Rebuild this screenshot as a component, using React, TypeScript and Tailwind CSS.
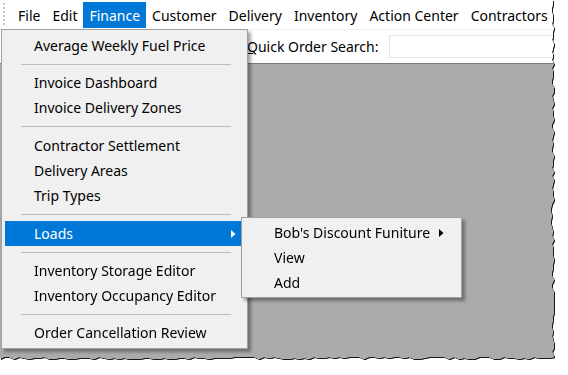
import React from "react";

function tornPolygon(): string {
  const W = 554;
  const H = 359;
  const pts: string[] = [];
  pts.push("0px 0px");
  let seed = 7;
  const rnd = () => {
    seed = (seed * 9301 + 49297) % 233280;
    return seed / 233280;
  };
  for (let y = 0; y <= H; y += 4) {
    const x = W - 1 + Math.round(rnd() * 3 - 1.5) + (y > 200 && y < 240 ? -1 : 0);
    pts.push(`${x}px ${y}px`);
  }
  for (let x = W; x >= 0; x -= 5) {
    const y = H - 1 + Math.round(rnd() * 3 - 1.5);
    pts.push(`${x}px ${y}px`);
  }
  pts.push(`0px ${H}px`);
  return `polygon(${pts.join(",")})`;
}

const font = { fontFamily: '"Noto Sans", "Segoe UI", sans-serif' };

function Sep({ tall }: { tall?: boolean }) {
  return (
    <div className={tall ? "py-[6px] pl-[19px] pr-[16px]" : "pb-[5px] pl-[19px] pr-[16px] pt-[6px]"}>
      <div className="h-px bg-[#bdbdbd]" />
    </div>
  );
}

function Item({ label, active, arrow, inlineArrow }: { label: string; active?: boolean; arrow?: boolean; inlineArrow?: boolean }) {
  return (
    <div
      className={
        active
          ? "mx-[3px] flex h-[25px] items-center justify-between bg-[#0078d7] pl-[29px] pr-[8px] text-white"
          : "mx-[3px] flex h-[25px] items-center pl-[29px] pr-[8px] text-black"
      }
    >
      <span className="leading-none">{label}</span>
      {arrow && (
        <svg width="5" height="8" viewBox="0 0 5 8">
          <path d="M0 0 L4.5 4 L0 8 Z" fill={active ? "#ffffff" : "#000000"} />
        </svg>
      )}
      {inlineArrow && (
        <svg width="5" height="8" viewBox="0 0 5 8" className="ml-[9px]">
          <path d="M0 0 L4.5 4 L0 8 Z" fill="#000000" />
        </svg>
      )}
    </div>
  );
}

export default function App() {
  const menus = ["File", "Edit", "Finance", "Customer", "Delivery", "Inventory", "Action Center", "Contractors"];
  return (
    <div className="relative h-[375px] w-[568px] overflow-hidden bg-white text-[14px]" style={font}>
      <div className="drop-shadow-[1px_1px_0.5px_rgba(0,0,0,0.9)]">
        <div className="relative flex h-[362px] w-[560px] flex-col bg-white" style={{ clipPath: tornPolygon() }}>
          {/* menu bar */}
          <div className="flex h-[30px] items-start border-b border-[#f0f0f0] bg-white pt-[2px]">
            <div className="ml-[3px] mt-[1px] flex h-[22px] w-[2px] flex-col justify-between">
              {Array.from({ length: 6 }).map((_, i) => (
                <div key={i} className="h-[2px] w-[2px] bg-[#c8c8c8]" />
              ))}
            </div>
            <div className="ml-[7px] flex">
              {menus.map((m) => (
                <div
                  key={m}
                  className={
                    m === "Finance"
                      ? "flex h-[26px] items-center bg-[#0078d7] px-[6px] text-white"
                      : "flex h-[26px] items-center px-[6px] text-black"
                  }
                >
                  {m}
                </div>
              ))}
            </div>
          </div>
          {/* toolbar */}
          <div className="flex h-[33px] items-center bg-white pl-[247px]">
            <span className="text-black">
              <span className="underline">Q</span>uick Order Search:
            </span>
            <div className="ml-[11px] h-[23px] flex-1 border border-[#e3e3e3] bg-white" />
          </div>
          {/* grey area */}
          <div className="flex-1 border-t border-[#7a7a7a] bg-[#ababab]" />

          {/* dropdown */}
          <div className="absolute left-[1px] top-[29px] w-[247px] border border-[#a0a0a0] bg-[#f0f0f0] py-[3px] shadow-[3px_3px_3px_rgba(0,0,0,0.35)]">
            <Item label="Average Weekly Fuel Price" />
            <Sep />
            <Item label="Invoice Dashboard" />
            <Item label="Invoice Delivery Zones" />
            <Sep tall />
            <Item label="Contractor Settlement" />
            <Item label="Delivery Areas" />
            <Item label="Trip Types" />
            <Sep tall />
            <Item label="Loads" active arrow />
            <Sep />
            <Item label="Inventory Storage Editor" />
            <Item label="Inventory Occupancy Editor" />
            <Sep />
            <Item label="Order Cancellation Review" />
          </div>

          {/* submenu */}
          <div className="absolute left-[241px] top-[217px] w-[221px] border border-[#a0a0a0] bg-[#f0f0f0] py-[2px] shadow-[3px_3px_3px_rgba(0,0,0,0.35)]">
            <Item label="Bob's Discount Funiture" inlineArrow />
            <Item label="View" />
            <Item label="Add" />
          </div>
        </div>
      </div>
    </div>
  );
}
